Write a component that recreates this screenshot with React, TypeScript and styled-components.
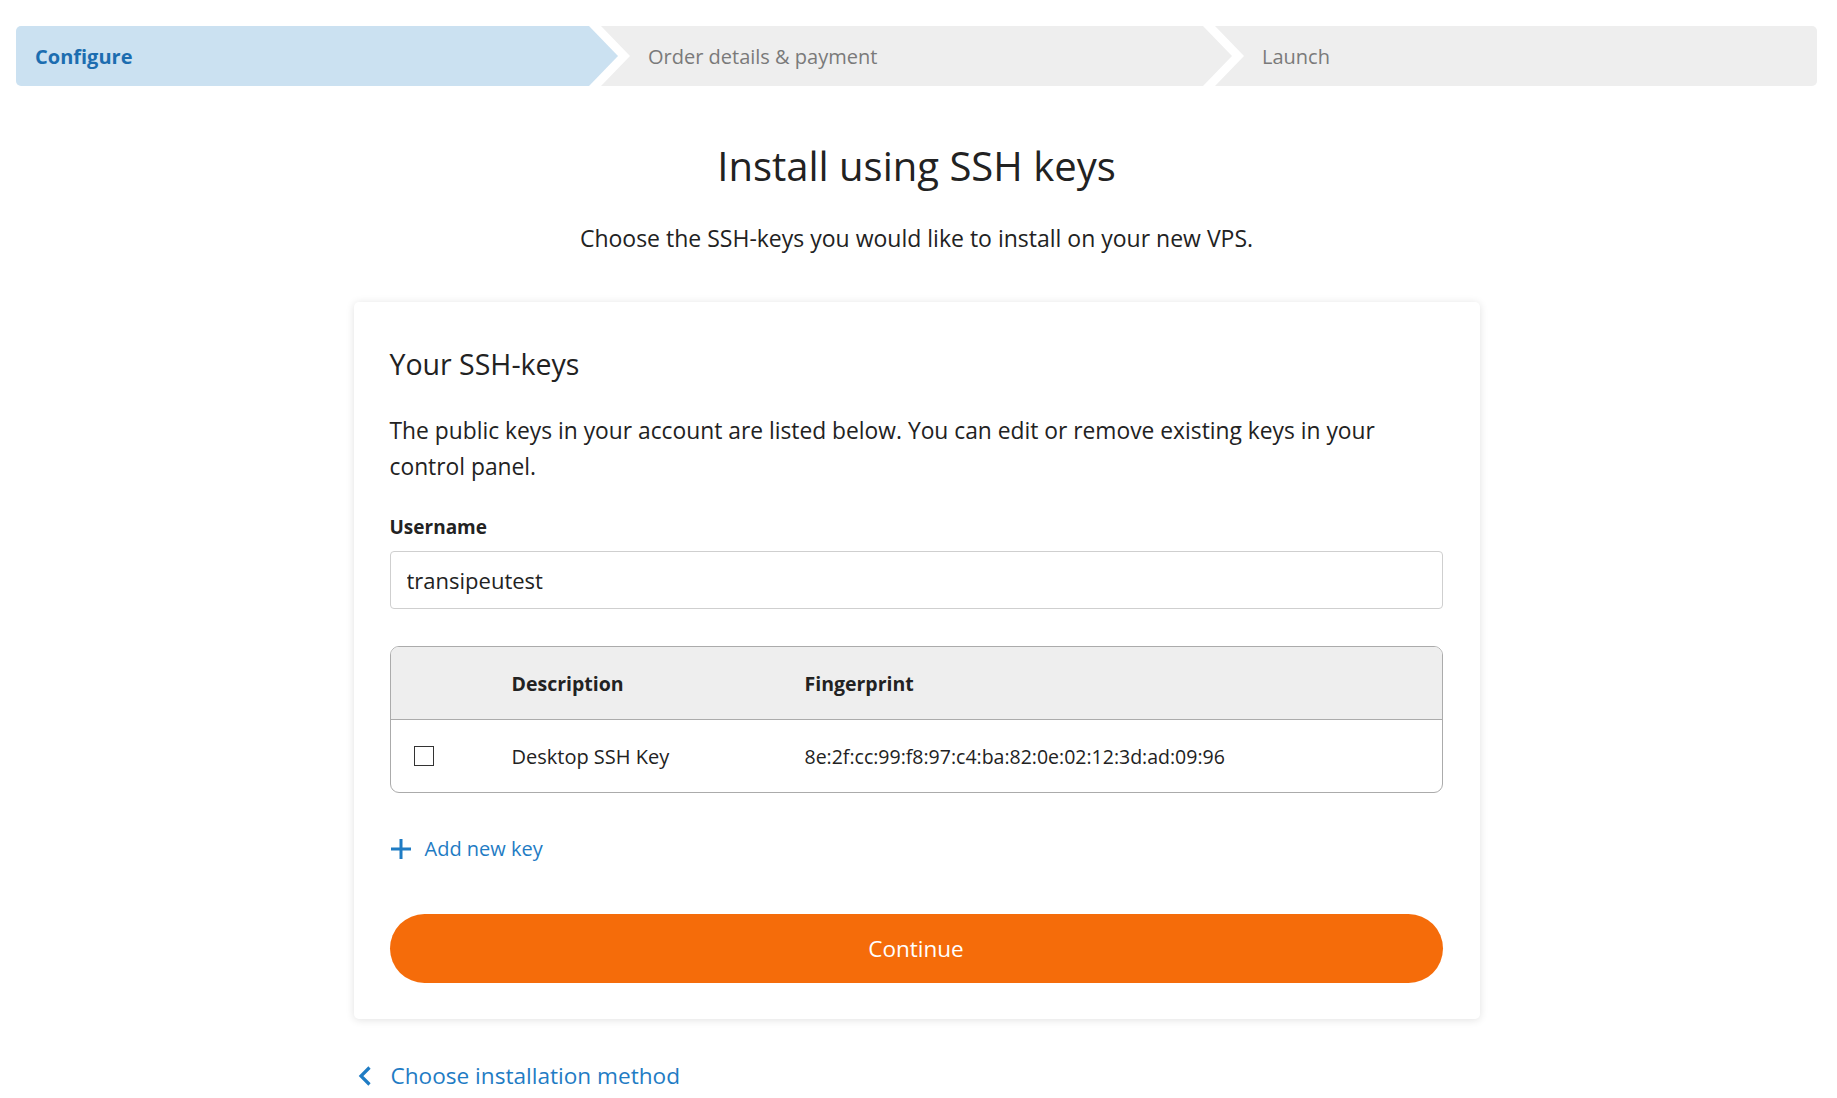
import React from "react";
import styled, { createGlobalStyle, css } from "styled-components";

const GlobalStyle = createGlobalStyle`
  html, body { margin: 0; padding: 0; background: #ffffff; }
  body { font-family: "Open Sans", "Noto Sans", Arial, sans-serif; color: #222222; }
  * { box-sizing: border-box; }
`;

const Page = styled.div`
  padding: 26px 20px 20px 16px;
`;

const Stepper = styled.nav`
  display: flex;
  height: 60px;
`;

type StepPos = "first" | "middle" | "last";

const Step = styled.div<{ $pos: StepPos; $active?: boolean }>`
  display: flex;
  align-items: center;
  flex: 1 1 ${(p) => (p.$pos === "middle" ? 78 : 49)}px;
  margin-left: ${(p) => (p.$pos === "first" ? 0 : -17)}px;
  padding-left: ${(p) => (p.$pos === "first" ? 19 : 47)}px;
  background: ${(p) => (p.$active ? "#cbe1f1" : "#eeeeee")};
  color: ${(p) => (p.$active ? "#1c6db0" : "#7a7a7a")};
  font-size: 20px;
  font-weight: ${(p) => (p.$active ? 700 : 400)};
  white-space: nowrap;
  ${(p) =>
    p.$pos === "first" &&
    css`
      border-radius: 5px 0 0 5px;
      clip-path: polygon(0 0, calc(100% - 29px) 0, 100% 50%, calc(100% - 29px) 100%, 0 100%);
    `}
  ${(p) =>
    p.$pos === "middle" &&
    css`
      clip-path: polygon(0 0, calc(100% - 29px) 0, 100% 50%, calc(100% - 29px) 100%, 0 100%, 29px 50%);
    `}
  ${(p) =>
    p.$pos === "last" &&
    css`
      border-radius: 0 5px 5px 0;
      clip-path: polygon(0 0, 100% 0, 100% 100%, 0 100%, 29px 50%);
    `}
`;

const Title = styled.h1`
  margin: 56px 0 0;
  text-align: center;
  font-size: 40px;
  line-height: 48px;
  font-weight: 400;
  color: #222;
`;

const Subtitle = styled.p`
  margin: 33px 0 0;
  text-align: center;
  font-size: 23px;
  line-height: 30px;
  color: #222;
`;

const Column = styled.div`
  max-width: 1126px;
  margin: 49px auto 0;
`;

const Card = styled.section`
  background: #fff;
  border-radius: 5px;
  box-shadow: 0 1px 8px rgba(0, 0, 0, 0.12);
  padding: 45px 37px 36px 36px;
`;

const CardTitle = styled.h2`
  margin: 0;
  font-size: 28.5px;
  line-height: 34px;
  font-weight: 400;
`;

const Paragraph = styled.p`
  margin: 32px 0 0;
  font-size: 22.8px;
  line-height: 36px;
`;

const Label = styled.label`
  display: block;
  margin-top: 29px;
  font-size: 19px;
  line-height: 26px;
  font-weight: 700;
`;

const TextInput = styled.input`
  display: block;
  width: 100%;
  height: 58px;
  margin-top: 11px;
  padding: 0 16px;
  border: 1px solid #cfcfcf;
  border-radius: 4px;
  font-family: inherit;
  font-size: 22px;
  color: #222;
  outline: none;
`;

const Table = styled.div`
  margin-top: 37px;
  border: 1px solid #ababab;
  border-radius: 9px;
  overflow: hidden;
`;

const Row = styled.div<{ $head?: boolean }>`
  display: grid;
  grid-template-columns: 121px 293px 1fr;
  align-items: center;
  height: ${(p) => (p.$head ? 73 : 72)}px;
  font-size: 20px;
  ${(p) =>
    p.$head &&
    css`
      background: #eeeeee;
      border-bottom: 1px solid #ababab;
      font-weight: 700;
      font-size: 19.5px;
    `}
`;

const CheckCell = styled.div`
  padding-left: 23px;
  display: flex;
  align-items: center;
`;

const Checkbox = styled.span`
  display: block;
  width: 20px;
  height: 20px;
  border: 1px solid #333;
  background: #fff;
`;

const Cell = styled.div<{ $mono?: boolean }>`
  ${(p) =>
    p.$mono &&
    css`
      font-size: 19.5px;
    `}
`;

const AddLink = styled.a`
  display: inline-flex;
  align-items: center;
  gap: 13px;
  margin-top: 42px;
  font-size: 20px;
  line-height: 28px;
  color: #1f7cc4;
  text-decoration: none;
  cursor: pointer;
`;

const ContinueButton = styled.button`
  display: block;
  width: 100%;
  height: 69px;
  margin-top: 49px;
  border: none;
  border-radius: 35px;
  background: #f56c0a;
  color: #fff;
  font-family: inherit;
  font-size: 22.5px;
  cursor: pointer;
`;

const BackLink = styled.a`
  display: inline-flex;
  align-items: center;
  gap: 19px;
  margin-top: 42px;
  margin-left: 4px;
  font-size: 22.6px;
  line-height: 30px;
  color: #1f7cc4;
  text-decoration: none;
  cursor: pointer;
`;

const Icon = styled.svg`
  flex: none;
  display: block;
`;

export default function App() {
  return (
    <>
      <GlobalStyle />
      <Page>
        <Stepper>
          <Step $pos="first" $active>
            Configure
          </Step>
          <Step $pos="middle">Order details &amp; payment</Step>
          <Step $pos="last">Launch</Step>
        </Stepper>

        <Title>Install using SSH keys</Title>
        <Subtitle>Choose the SSH-keys you would like to install on your new VPS.</Subtitle>

        <Column>
          <Card>
            <CardTitle>Your SSH-keys</CardTitle>
            <Paragraph>
              The public keys in your account are listed below. You can edit or remove existing keys in your
              control panel.
            </Paragraph>
            <Label htmlFor="username">Username</Label>
            <TextInput id="username" defaultValue="transipeutest" />

            <Table>
              <Row $head>
                <Cell />
                <Cell>Description</Cell>
                <Cell>Fingerprint</Cell>
              </Row>
              <Row>
                <CheckCell>
                  <Checkbox />
                </CheckCell>
                <Cell>Desktop SSH Key</Cell>
                <Cell $mono>8e:2f:cc:99:f8:97:c4:ba:82:0e:02:12:3d:ad:09:96</Cell>
              </Row>
            </Table>

            <AddLink>
              <Icon width="22" height="22" viewBox="0 0 22 22">
                <path d="M11 1v20M1 11h20" stroke="#1f7cc4" strokeWidth="3" fill="none" />
              </Icon>
              Add new key
            </AddLink>

            <ContinueButton>Continue</ContinueButton>
          </Card>

          <BackLink>
            <Icon width="14" height="20" viewBox="0 0 14 20">
              <path d="M11.5 1.5 3 10l8.5 8.5" stroke="#1f7cc4" strokeWidth="3.2" fill="none" />
            </Icon>
            Choose installation method
          </BackLink>
        </Column>
      </Page>
    </>
  );
}
